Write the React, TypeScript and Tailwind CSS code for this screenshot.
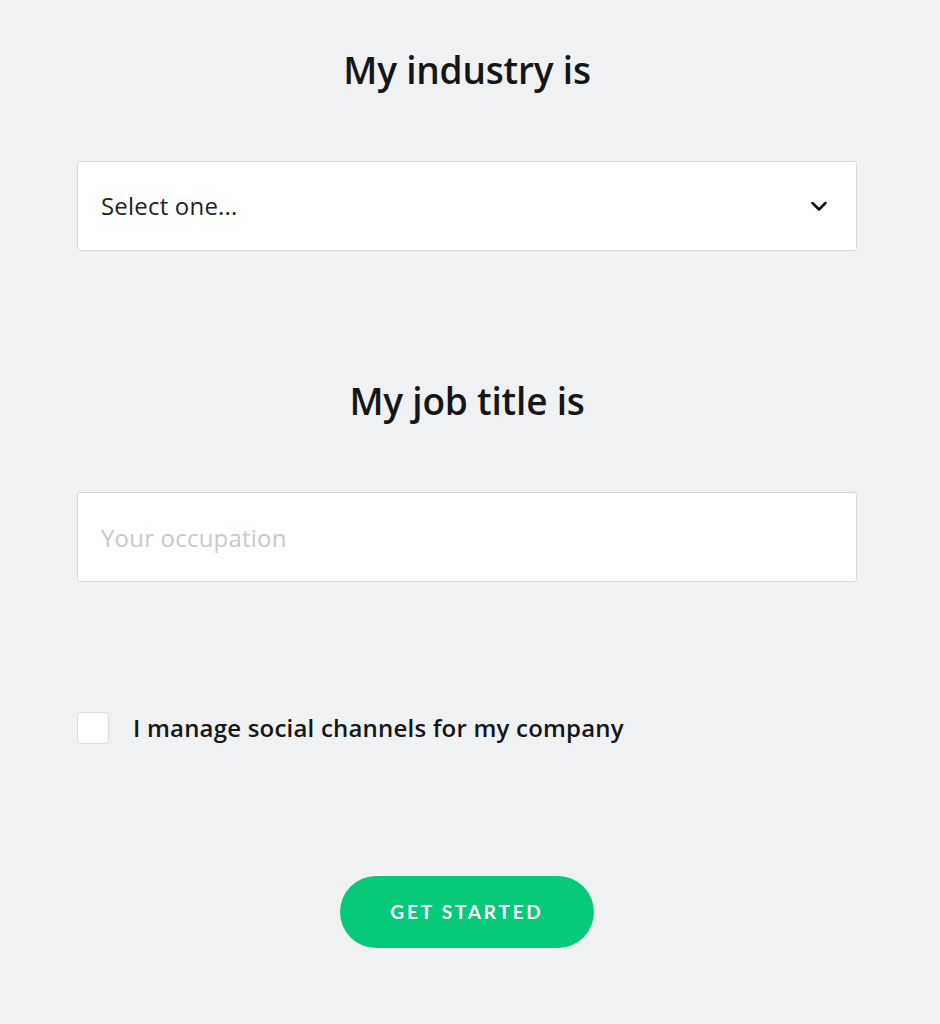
import { useState } from 'react';

const font = { fontFamily: '"Open Sans", "Noto Sans", sans-serif' };

export default function App() {
    const [checked, setChecked] = useState(false);

    return (
        <div className="min-h-[1024px] w-[940px] bg-[#f0f1f3] text-[#161616]" style={font}>
            <div className="ml-[77px] w-[780px] pt-[46px]">
                <h2 className="text-center text-[37px] leading-[48px] font-semibold tracking-[-0.2px]">My industry is</h2>

                <div className="mt-[67px] flex h-[90px] items-center justify-between rounded-[3px] border border-[#d6d7d9] bg-white pr-[27px] pl-[23px]">
                    <span className="text-[24px] tracking-[0.2px] text-[#222]">Select one...</span>
                    <svg width="20" height="12" viewBox="0 0 20 12" fill="none">
                        <path d="M3.5 3l6.5 6.5 6.5-6.5" stroke="#111" strokeWidth="2.5" strokeLinecap="round" strokeLinejoin="round" />
                    </svg>
                </div>

                <h2 className="mt-[126px] text-center text-[37px] leading-[48px] font-semibold tracking-[-0.2px]">My job title is</h2>

                <input
                    type="text"
                    placeholder="Your occupation"
                    className="mt-[67px] block h-[90px] w-full rounded-[3px] border border-[#d6d7d9] bg-white px-[23px] text-[24px] tracking-[0.2px] outline-none placeholder:text-[#c9c9c9]"
                />

                <label className="mt-[128px] flex cursor-pointer items-center gap-[24px]">
                    <button
                        type="button"
                        onClick={() => setChecked(!checked)}
                        className="h-[32px] w-[32px] rounded-[4px] border border-[#dcdde0] bg-white"
                    />
                    <span className="text-[24px] font-semibold tracking-[0.2px]">I manage social channels for my company</span>
                </label>

                <div className="mt-[130px] flex justify-center">
                    <button
                        type="button"
                        className="h-[72px] w-[254px] rounded-full bg-[#06c979] text-[19px] font-bold tracking-[2.8px] text-white"
                        style={{ fontFamily: 'Lato, "Open Sans", sans-serif' }}
                    >
                        GET STARTED
                    </button>
                </div>
            </div>
        </div>
    );
}
